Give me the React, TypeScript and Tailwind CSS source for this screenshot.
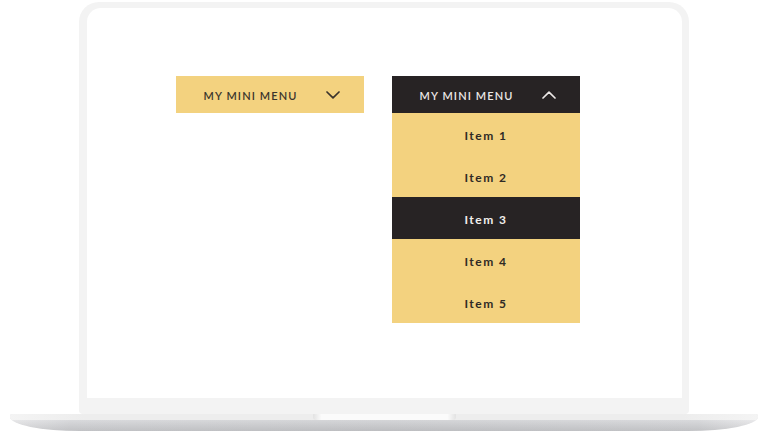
import React from 'react';

const items = ['Item 1', 'Item 2', 'Item 3', 'Item 4', 'Item 5'];
const activeItem = 'Item 3';

const Chevron: React.FC<{ up?: boolean; className?: string }> = ({ up = false, className = '' }) => (
  <svg width="14" height="8" viewBox="0 0 14 8" fill="none" className={className}>
    <polyline
      points={up ? '1,7 7,1.2 13,7' : '1,1 7,6.8 13,1'}
      stroke="currentColor"
      strokeWidth="1.7"
      strokeLinecap="round"
      strokeLinejoin="round"
    />
  </svg>
);

interface MiniMenuProps {
  open?: boolean;
}

const MiniMenu: React.FC<MiniMenuProps> = ({ open = false }) => {
  return (
    <div className="w-[188px] flex flex-col">
      <button
        className={`h-[37px] pl-[4px] flex items-center justify-center gap-[29px] ${
          open ? 'bg-[#272324] text-[#ece8e6]' : 'bg-[#f3d27f] text-[#3a342c]'
        }`}
      >
        <span className="pt-[3px] text-[11px] font-semibold tracking-[1.1px] uppercase">My Mini Menu</span>
        <Chevron up={open} className="mt-[1px]" />
      </button>

      {open && (
        <ul className="flex flex-col">
          {items.map(item => (
            <li
              key={item}
              className={`h-[42px] pt-[3px] flex items-center justify-center text-[12px] font-bold tracking-[1.5px] ${
                item === activeItem ? 'bg-[#272324] text-[#f2efec]' : 'bg-[#f3d27f] text-[#2f2a25]'
              }`}
            >
              {item}
            </li>
          ))}
        </ul>
      )}
    </div>
  );
};

export default function App() {
  return (
    <div
      className="w-[768px] h-[432px] bg-white flex flex-col items-center overflow-hidden"
      style={{ fontFamily: 'Lato, "Open Sans", sans-serif' }}
    >
      {/* Lid */}
      <div className="mt-[2px] w-[610px] h-[412px] bg-[#f3f3f3] rounded-t-[20px] rounded-b-[4px] pl-[8px] pr-[7px] pt-[6px] pb-[16px] flex">
        <div className="flex-1 bg-white rounded-t-[14px] pt-[68px] pl-[89px] flex items-start gap-[28px]">
          <MiniMenu />
          <MiniMenu open />
        </div>
      </div>

      {/* Base */}
      <div className="w-[748px] h-[17px] flex flex-col rounded-tl-[2px] rounded-tr-[2px] rounded-bl-[70px_14px] rounded-br-[70px_14px] overflow-hidden bg-[linear-gradient(90deg,#e4e4e6_0%,#d2d3d6_8%,#cdced1_50%,#d2d3d6_92%,#e6e6e8_100%)]">
        <div className="h-[6px] flex justify-center bg-[linear-gradient(90deg,#f4f4f4_0%,#ededed_10%,#ededed_90%,#f4f4f4_100%)]">
          <div className="w-[143px] h-full rounded-b-[3px] bg-[linear-gradient(90deg,#e2e2e2_0%,#fbfbfb_6%,#fbfbfb_94%,#e2e2e2_100%)]" />
        </div>
        <div className="flex-1 bg-[linear-gradient(180deg,rgba(255,255,255,0.15)_0%,rgba(0,0,0,0.08)_100%)]" />
      </div>
    </div>
  );
}
